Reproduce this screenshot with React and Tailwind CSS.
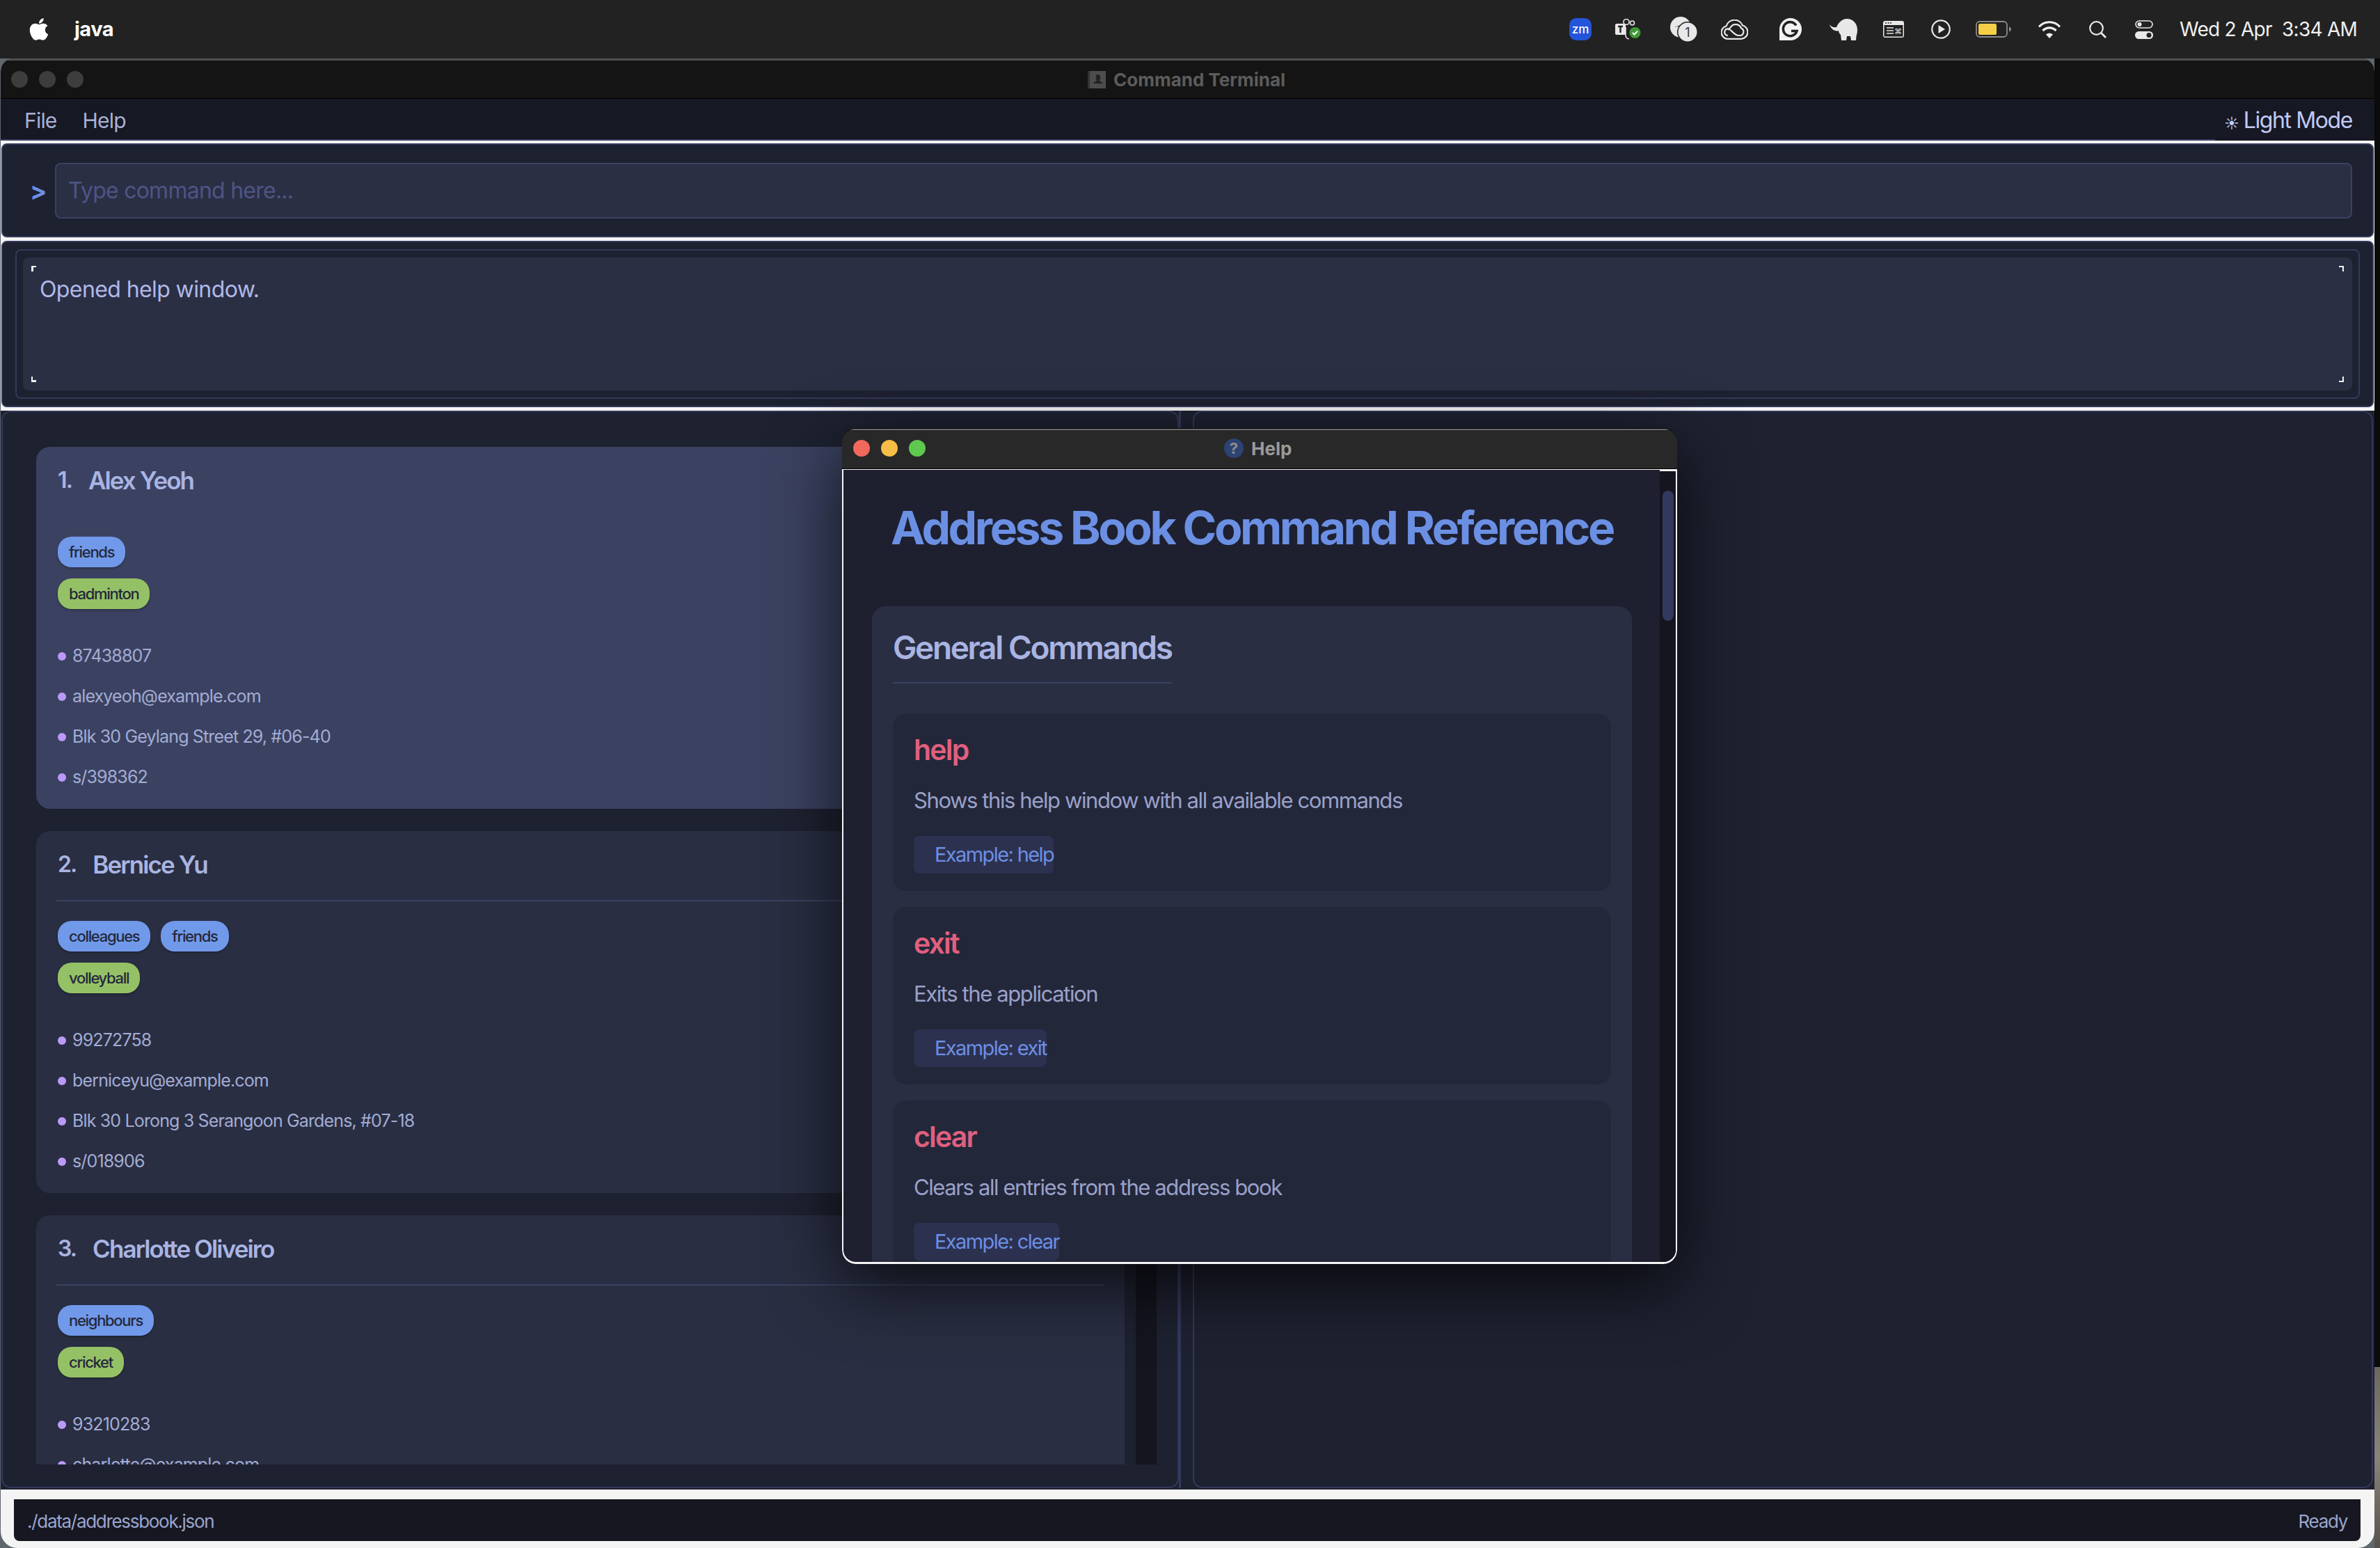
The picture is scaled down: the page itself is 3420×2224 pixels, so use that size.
import { FaApple } from "react-icons/fa";

const people = [
  {
    name: "Alex Yeoh",
    selected: true,
    tags: ["friends"],
    hobbies: ["badminton"],
    details: ["87438807", "alexyeoh@example.com", "Blk 30 Geylang Street 29, #06-40", "s/398362"],
  },
  {
    name: "Bernice Yu",
    tags: ["colleagues", "friends"],
    hobbies: ["volleyball"],
    details: ["99272758", "berniceyu@example.com", "Blk 30 Lorong 3 Serangoon Gardens, #07-18", "s/018906"],
  },
  {
    name: "Charlotte Oliveiro",
    tags: ["neighbours"],
    hobbies: ["cricket"],
    details: ["93210283", "charlotte@example.com"],
  },
];

const commands = [
  { name: "help", desc: "Shows this help window with all available commands" },
  { name: "exit", desc: "Exits the application" },
  { name: "clear", desc: "Clears all entries from the address book" },
];

function Tag({ label, green }) {
  return (
    <span
      className={`h-[44px] px-[16px] flex items-center rounded-[20px] text-[22px] font-medium tracking-[-1.3px] shadow-[0_2px_3px_rgba(0,0,0,0.25)] ${
        green ? "bg-[#95c166] text-[#24283b]" : "bg-[#7199ea] text-[#24283b]"
      }`}
    >
      {label}
    </span>
  );
}

function PersonCard({ person, index }) {
  return (
    <div
      className={`shrink-0 rounded-[20px] px-[31px] pt-[24px] pb-[16px] ${
        person.selected ? "bg-[#3b4261]" : "bg-[#292e42]"
      }`}
    >
      <div className="h-[48px] flex items-center text-[#a9b4e2] text-[35px] font-semibold tracking-[-1.9px]">
        <span className="text-[32px]">{index + 1}.</span>
        <span className="ml-[24px]">{person.name}</span>
      </div>
      <div className="h-[2px] mt-[27px] -mx-[2px] bg-[#3b4261]" />
      <div className="mt-[28px] flex gap-[15px]">
        {person.tags.map((t) => (
          <Tag key={t} label={t} />
        ))}
      </div>
      <div className="mt-[16px] flex gap-[15px]">
        {person.hobbies.map((t) => (
          <Tag key={t} label={t} green />
        ))}
      </div>
      <div className="mt-[39px]">
        {person.details.map((d) => (
          <div key={d} className="h-[58px] flex items-center text-[#a3acd4] text-[25px] tracking-[-0.85px]">
            <span className="w-[12px] h-[12px] rounded-full bg-[#bb9af7] mr-[9px]" />
            {d}
          </div>
        ))}
      </div>
    </div>
  );
}

function CommandCard({ cmd }) {
  return (
    <div className="h-[255px] shrink-0 rounded-[20px] bg-[#23273a] px-[30px] pt-[25px]">
      <div className="h-[56px] flex items-center text-[#e0607e] text-[41px] font-semibold tracking-[-1.8px]">{cmd.name}</div>
      <div className="h-[44px] mt-[22px] flex items-center text-[#9aa1c9] text-[31px] tracking-[-1.4px]">{cmd.desc}</div>
      <div className="mt-[29px] h-[54px] w-fit rounded-[8px] bg-[#2d3150] pl-[30px] flex items-center text-[#6b8fe3] text-[29px] tracking-[-1.6px]">
        Example: {cmd.name}
      </div>
    </div>
  );
}

function MenuIcons() {
  return (
    <div className="flex items-center">
      {/* zoom */}
      <svg width="32" height="32" viewBox="0 0 32 32">
        <rect width="32" height="32" rx="10" fill="#2454d8" />
        <text x="16" y="21.500" textAnchor="middle" fontSize="17" fill="#fff" fontFamily="Inter, sans-serif" fontWeight="500">zm</text>
      </svg>
      {/* teams */}
      <svg width="37" height="30" viewBox="0 0 37 30" className="ml-[34px]">
        <rect x="0" y="7" width="15" height="16" rx="2" fill="#e8e8e8" />
        <path d="M4 11h7M7.500 11v9" stroke="#222" strokeWidth="2.400" />
        <circle cx="16" cy="4.500" r="4" fill="none" stroke="#e8e8e8" strokeWidth="1.600" />
        <circle cx="24.500" cy="6" r="3" fill="none" stroke="#e8e8e8" strokeWidth="1.600" />
        <path d="M15 12v12a5 5 0 0 0 5 5" fill="none" stroke="#e8e8e8" strokeWidth="1.600" />
        <circle cx="28.500" cy="20" r="8" fill="#3f9a35" />
        <path d="M25 20l2.600 2.600 4.400-4.800" fill="none" stroke="#fff" strokeWidth="2" />
      </svg>
      {/* cloud with badge */}
      <svg width="40" height="36" viewBox="0 0 40 36" className="ml-[41px]">
        <circle cx="16" cy="15" r="15" fill="#e8e8e8" />
        <path d="M7 15l15-5-4 3z" fill="#222" />
        <circle cx="26" cy="22" r="15" fill="#222" />
        <circle cx="26" cy="22" r="13.500" fill="#e8e8e8" />
        <text x="26" y="29" textAnchor="middle" fontSize="18" fill="#333" fontFamily="Inter, sans-serif">1</text>
      </svg>
      {/* creative cloud */}
      <svg width="39" height="29" viewBox="0 0 39 29" className="ml-[34px]" fill="none" stroke="#e8e8e8" strokeWidth="2.200">
        <path d="M10 27.800A9.300 9.300 0 0 1 7.500 9.500 12.500 12.500 0 0 1 31 8.500a9.800 9.800 0 0 1-2 19.300z" />
        <path d="M10 23a4.800 4.800 0 1 1 3.500-8c3.500 3 7.500 8 11.500 8h3a5.500 5.500 0 0 0 1-10.500A8.500 8.500 0 0 0 14 11l-4 4" />
      </svg>
      {/* grammarly */}
      <svg width="32" height="32" viewBox="0 0 32 32" className="ml-[45px]">
        <path d="M16 0a16 16 0 0 1 0 32H0V16A16 16 0 0 1 16 0z" fill="#f2f2f2" />
        <path d="M24 10.500a10 10 0 1 0 1 8h-8" fill="none" stroke="#222" strokeWidth="3.600" />
      </svg>
      {/* elephant */}
      <svg width="40" height="31" viewBox="0 0 40 31" className="ml-[40px]">
        <path d="M0 8c3 4 6 5 10 4 2-5 7-12 15-12 9 0 15 7 15 16 0 3-.5 6-1.500 9l-.5 6h-7l-1-6h-5l-1 6h-7l-1-8c-2-2-3-4-3-6-5 2-11-2-13-9z" fill="#e8e8e8" />
      </svg>
      {/* window with cmd */}
      <svg width="30" height="24" viewBox="0 0 30 24" className="ml-[37px]">
        <rect width="30" height="24" rx="3" fill="#e8e8e8" />
        <rect x="1.500" y="6" width="27" height="16.500" fill="#222" />
        <circle cx="4" cy="3" r="1" fill="#222" />
        <circle cx="7.500" cy="3" r="1" fill="#222" />
        <circle cx="11" cy="3" r="1" fill="#222" />
        <path d="M5 10h10M5 14h10M5 18h10" stroke="#e8e8e8" strokeWidth="1.600" />
        <text x="21.500" y="18.500" textAnchor="middle" fontSize="11" fill="#e8e8e8" fontFamily="DejaVu Sans, sans-serif">⌘</text>
      </svg>
      {/* play */}
      <svg width="28" height="28" viewBox="0 0 28 28" className="ml-[39px]">
        <circle cx="14" cy="14" r="12.700" fill="none" stroke="#e8e8e8" strokeWidth="2.200" />
        <path d="M10.500 8l9.500 6-9.500 6z" fill="#e8e8e8" />
      </svg>
      {/* battery */}
      <svg width="51" height="24" viewBox="0 0 51 24" className="ml-[36px]">
        <rect x="1" y="1" width="44" height="22" rx="5" fill="none" stroke="#8a8a8a" strokeWidth="1.800" />
        <rect x="4" y="4" width="26" height="16" rx="2.500" fill="#f7cf46" />
        <path d="M48 8.500c2 .5 3 2 3 3.500s-1 3-3 3.500z" fill="#8a8a8a" />
      </svg>
      {/* wifi */}
      <svg width="34" height="25" viewBox="0 0 34 25" className="ml-[38px]" fill="none" stroke="#f0f0f0" strokeWidth="3.200">
        <path d="M2 8.500C10-.5 24-.5 32 8.500" />
        <path d="M7.500 14C13 8.500 21 8.500 26.500 14" />
        <path d="M17 25l-5-5.500c3-2.500 7-2.500 10 0z" fill="#f0f0f0" stroke="none" />
      </svg>
      {/* search */}
      <svg width="25" height="25" viewBox="0 0 25 25" className="ml-[40px]" fill="none" stroke="#e8e8e8" strokeWidth="2.200">
        <circle cx="10.500" cy="10.500" r="9.300" />
        <path d="M17 17l7 7" strokeWidth="2.800" />
      </svg>
      {/* control centre */}
      <svg width="26" height="27" viewBox="0 0 26 27" className="ml-[41px]">
        <rect x="1" y="1" width="24" height="10" rx="5" fill="none" stroke="#e8e8e8" strokeWidth="1.600" />
        <circle cx="6.500" cy="6" r="3" fill="#e8e8e8" />
        <rect x="0" y="16" width="26" height="11" rx="5.500" fill="#e8e8e8" />
        <circle cx="20" cy="21.500" r="3.500" fill="#222" />
      </svg>
      <span className="ml-[38px] text-[#f0f0f0] text-[28px] tracking-[-0.75px] whitespace-pre">Wed 2 Apr  3:34 AM</span>
    </div>
  );
}

function CornerMark({ className, d }) {
  return (
    <svg width="7" height="8" viewBox="0 0 7 8" className={`absolute ${className}`}>
      <path d={d} fill="#f4f4f4" />
    </svg>
  );
}

function HelpWindow() {
  return (
    <div className="absolute left-[1210px] top-[615px] w-[1200px] h-[1201px] rounded-[20px] overflow-hidden flex flex-col shadow-[0_30px_100px_rgba(0,0,0,0.75)] border-t border-black">
      <div className="h-[57px] shrink-0 bg-[#282828] border-t-2 border-[#6a6a6a] pb-[3px] flex items-center relative">
        <span className="absolute left-[16px] w-[24px] h-[24px] rounded-full bg-[#f3685c]" />
        <span className="absolute left-[56px] w-[24px] h-[24px] rounded-full bg-[#f7be45]" />
        <span className="absolute left-[96px] w-[24px] h-[24px] rounded-full bg-[#5fc84f]" />
        <div className="ml-[549px] flex items-center gap-[11px]">
          <span className="w-[28px] h-[28px] rounded-full bg-[#2c4373] text-[#8d8d8d] text-[22px] font-bold flex items-center justify-center">?</span>
          <span className="text-[#9a9a9a] text-[26px] font-bold">Help</span>
        </div>
      </div>
      <div className="flex-1 min-h-0 flex bg-[#1e2030] border-t border-black">
        <div className="flex-1 min-h-0 flex border-x-2 border-t border-b-[3px] border-[#f4f4f4] rounded-b-[20px] overflow-hidden">
          <div className="flex-1 min-w-0 pl-[41px] pr-[40px] pt-[38px] overflow-hidden">
            <h1 className="h-[90px] flex items-center justify-center text-[#6b8fe3] text-[66px] font-bold tracking-[-3.4px] whitespace-nowrap">
              Address Book Command Reference
            </h1>
            <div className="mt-[68px] rounded-[20px] bg-[#292e42] px-[30px] pt-[29px]">
              <h2 className="w-fit h-[60px] pb-[20px] box-content border-b-2 border-[#3b4261] flex items-center text-[#a9b4e2] text-[46px] font-semibold tracking-[-2.35px]">
                General Commands
              </h2>
              <div className="mt-[43px] flex flex-col gap-[23px]">
                {commands.map((c) => (
                  <CommandCard key={c.name} cmd={c} />
                ))}
              </div>
            </div>
          </div>
          <div className="w-[23px] shrink-0 bg-[#14151f] border-t-2 border-[#f4f4f4] flex justify-center pt-[28px]">
            <span className="w-[16px] h-[187px] rounded-[8px] bg-[#33395c]" />
          </div>
        </div>
      </div>
    </div>
  );
}

export default function App() {
  return (
    <div className="relative w-[3420px] h-[2224px] overflow-hidden bg-[#5f666e] flex flex-col font-['Inter',sans-serif]">
      {/* mac menu bar */}
      <div className="h-[84px] shrink-0 bg-[#222222] flex items-center justify-between pl-[40px] pr-[33px]">
        <div className="flex items-center">
          <FaApple className="text-white w-[32px] h-[36px]" />
          <span className="ml-[35px] text-white text-[29px] font-bold tracking-[-0.5px]">java</span>
        </div>
        <MenuIcons />
      </div>

      <div className="flex-1 min-h-0 flex">
        {/* app window */}
        <div className="w-[3411px] shrink-0 ml-[1px] rounded-t-[18px] rounded-b-[24px] overflow-hidden flex flex-col bg-[#f4f4f4]">
          <div className="h-[58px] shrink-0 bg-[#141414] border-t-[3px] border-[#505050] border-b border-b-black flex items-center pl-[15px] relative">
            <span className="w-[24px] h-[24px] rounded-full bg-[#3d3d3d]" />
            <span className="w-[24px] h-[24px] rounded-full bg-[#3d3d3d] ml-[16px]" />
            <span className="w-[24px] h-[24px] rounded-full bg-[#3d3d3d] ml-[16px]" />
            <div className="ml-[1443px] flex items-center gap-[11px]">
              <svg width="26" height="25" viewBox="0 0 26 25">
                <rect width="26" height="25" fill="#4d4d4d" />
                <rect width="3" height="25" fill="#333" />
                <path d="M14.500 5a3.700 3.700 0 0 1 3.700 4c0 2-1 3.500-1.500 4.500 0 1.500 4.500 2 5 4.500H8c.5-2.500 5-3 5-4.500-.5-1-1.500-2.500-1.500-4.500A3.700 3.700 0 0 1 14.500 5z" fill="#222" />
              </svg>
              <span className="text-[#5c5c5c] text-[26px] font-bold">Command Terminal</span>
            </div>
          </div>

          {/* file menu */}
          <div className="h-[60px] shrink-0 bg-[#161823] flex items-center pl-[34px] pr-[32px] pt-[2px] relative">
            <span className="text-[#a9b1d6] text-[30px] tracking-[-0.8px]">File</span>
            <span className="ml-[37px] text-[#a9b1d6] text-[30px] tracking-[-0.8px]">Help</span>
            <span className="ml-auto text-[#c0caf5] text-[32px] tracking-[-1.4px] whitespace-pre">
              <span className="text-[20px]">☀</span> Light Mode
            </span>
            <span className="absolute left-0 bottom-0 w-[3182px] h-[2px] bg-[#3b4261]" />
          </div>

          {/* command box */}
          <div className="mt-[4px] h-[135px] shrink-0 mx-[1px] rounded-[8px] bg-[#1e2130] border-2 border-[#33395c] flex items-center pl-[39px] pr-[29px]">
            <span className="text-[#6b8fe3] text-[36px] font-bold w-[36px]">&gt;</span>
            <div className="flex-1 h-[80px] rounded-[8px] bg-[#2b2f44] border-2 border-[#3b4261] flex items-center pl-[17px] text-[#4d5585] text-[32px] tracking-[-0.75px]">
              Type command here...
            </div>
          </div>

          {/* result display */}
          <div className="mt-[5px] h-[239px] shrink-0 mx-[1px] rounded-[8px] bg-[#1e2130] border-2 border-[#33395c] pt-[10px] pb-[10px] pl-[18px] pr-[18px]">
            <div className="h-full rounded-[8px] border-2 border-[#33395c] px-[9px] py-[10px]">
              <div className="relative h-full rounded-[8px] bg-[#2b2f44] pl-[24px] pt-[22px] text-[#afb9e8] text-[32px] tracking-[-0.6px]">
                Opened help window.
                <CornerMark className="left-[12px] top-[12px]" d="M0 0h7v2H3v6H0z" />
                <CornerMark className="left-[12px] bottom-[12px]" d="M0 0h2v5h5v3H0z" />
                <CornerMark className="right-[12px] top-[12px]" d="M0 0h7v8H5V2H0z" />
                <CornerMark className="right-[12px] bottom-[12px]" d="M5 0h2v8H0V6h5z" />
              </div>
            </div>
          </div>

          {/* person list and detail */}
          <div className="mt-[5px] h-[1550px] shrink-0 bg-[#1e2130] flex pl-[1px] pr-[2px] pb-[2px]">
            <div className="w-[1692px] shrink-0 rounded-[14px] border-2 border-[#33395c] pl-[48px] pr-[30px] pb-[32px] flex gap-[16px]">
              <div className="flex-1 min-w-0 flex flex-col gap-[32px] pt-[50px] overflow-hidden">
                {people.map((p, i) => (
                  <PersonCard key={p.name} person={p} index={i} />
                ))}
              </div>
              <div className="w-[30px] shrink-0 mt-[50px] bg-[#14151f]" />
            </div>
            <div className="w-[3px] shrink-0 bg-[#33395c]" />
            <div className="flex-1 ml-[17px] rounded-[14px] border-2 border-[#33395c]" />
          </div>

          {/* status bar */}
          <div className="mt-[14px] ml-[19px] w-[3372px] h-[60px] shrink-0 rounded-b-[8px] bg-[#161720] flex items-center justify-between px-[19px] pt-[2px] text-[#9aa5ce] text-[26px] tracking-[-1.3px]">
            <span>./data/addressbook.json</span>
            <span>Ready</span>
          </div>
        </div>

        {/* what peeks out at the right edge */}
        <div className="flex-1 flex flex-col">
          <div className="flex-1 bg-[#0a0a0a]" />
          <div className="h-[260px] bg-[linear-gradient(180deg,#6d675f,#8a8378,#57514a)]" />
        </div>
      </div>

      <HelpWindow />
    </div>
  );
}
